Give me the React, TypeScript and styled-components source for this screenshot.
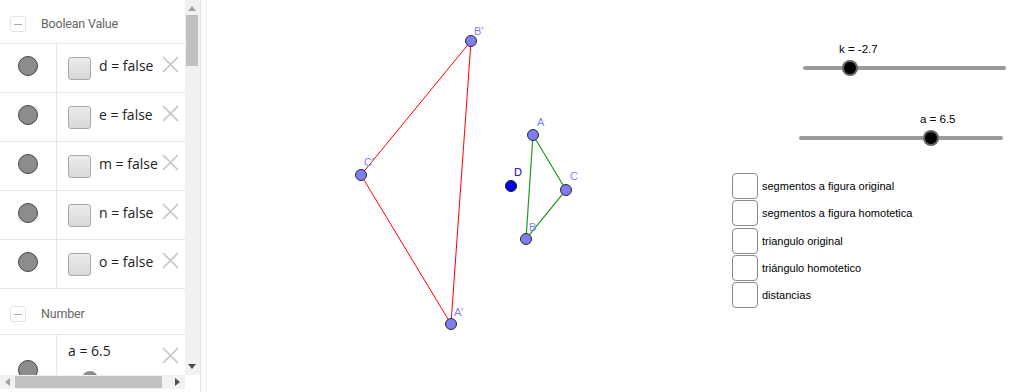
import styled, { createGlobalStyle } from 'styled-components';

const GlobalStyle = createGlobalStyle`
  html, body {
    margin: 0;
    padding: 0;
    background: #ffffff;
    overflow: hidden;
  }
  * {
    box-sizing: border-box;
  }
`;

interface BoolItem {
  name: string;
}

const BOOLEANS: Array<BoolItem> = [
  { name: 'd' },
  { name: 'e' },
  { name: 'm' },
  { name: 'n' },
  { name: 'o' },
];

interface Pt {
  label: string;
  x: number;
  y: number;
  lx: number;
  ly: number;
}

const IMAGE_PTS: Array<Pt> = [
  { label: "B'", x: 471, y: 41, lx: 474, ly: 35 },
  { label: "C'", x: 361, y: 175, lx: 364, ly: 166 },
  { label: "A'", x: 451, y: 324, lx: 454, ly: 316 },
];

const ORIG_PTS: Array<Pt> = [
  { label: 'A', x: 533, y: 135, lx: 537, ly: 126 },
  { label: 'C', x: 566, y: 190, lx: 570, ly: 180 },
  { label: 'B', x: 526, y: 239, lx: 529, ly: 231 },
];

const CHECKS = [
  'segmentos a figura original',
  'segmentos a figura homotetica',
  'triangulo original',
  'triángulo homotetico',
  'distancias',
];

const CANVAS_LEFT = 207;

const Page = styled.div`
  display: flex;
  width: 1010px;
  height: 392px;
  overflow: hidden;
`;

const AlgebraPanel = styled.div`
  position: relative;
  width: 200px;
  height: 392px;
  display: grid;
  grid-template-columns: 185px 15px;
  grid-template-rows: 375px 14px 3px;
  background: #ffffff;
`;

const AlgebraList = styled.div`
  overflow: hidden;
  font-family: 'Open Sans', 'Liberation Sans', sans-serif;
  color: #333333;
`;

const GroupHeader = styled.div<{ $h: number }>`
  display: flex;
  align-items: center;
  gap: 15px;
  height: ${({ $h }) => $h}px;
  padding: 4px 0 0 10px;
  border-bottom: 1px solid #e6e6e6;
  font-family: 'Roboto', 'Open Sans', sans-serif;
  font-size: 12.5px;
  letter-spacing: -0.2px;
  color: #666666;
`;

const CollapseBox = styled.span`
  position: relative;
  width: 16px;
  height: 16px;
  border: 1px solid #e3e3e3;
  border-radius: 3px;
  &::after {
    content: '';
    position: absolute;
    left: 3px;
    right: 3px;
    top: 7px;
    height: 1px;
    background: #aaaaaa;
  }
`;

const Row = styled.div<{ $h?: number }>`
  display: flex;
  height: ${({ $h }) => $h ?? 49}px;
  border-bottom: 1px solid #e6e6e6;
`;

const MarbleCell = styled.div<{ $top?: number }>`
  width: 57px;
  flex: none;
  display: flex;
  justify-content: center;
  align-items: ${({ $top }) => ($top ? 'flex-start' : 'center')};
  padding-top: ${({ $top }) => $top ?? 0}px;
  padding-bottom: ${({ $top }) => ($top ? 0 : 4)}px;
  border-right: 1px solid #e6e6e6;
`;

const Marble = styled.span`
  width: 20px;
  height: 20px;
  border-radius: 50%;
  background: #8c8c8c;
  border: 1px solid #444444;
`;

const ItemCell = styled.div`
  position: relative;
  flex: 1;
  display: flex;
  align-items: center;
  gap: 8px;
  padding: 0 0 0 11px;
`;

const BoolBox = styled.span`
  width: 23px;
  height: 23px;
  border-radius: 3px;
  border: 1px solid #a8a8a8;
  background: linear-gradient(#ececec, #d8d8d8);
`;

const ItemText = styled.span<{ $lift?: number }>`
  font-size: 14px;
  color: #222222;
  white-space: nowrap;
  margin-bottom: ${({ $lift }) => $lift ?? 0}px;
`;

const DeleteBtn = styled.svg`
  position: absolute;
  right: 6px;
  top: 12px;
`;

const NumberCell = styled.div`
  position: relative;
  flex: 1;
  display: flex;
  flex-direction: column;
  gap: 10px;
  padding: 6px 0 0 11px;
`;

const MiniSlider = styled.div`
  display: flex;
  align-items: center;
  gap: 4px;
  font-size: 14px;
  color: #222222;
`;

const MiniTrack = styled.span`
  position: relative;
  width: 24px;
  height: 3px;
  background: #888888;
  &::after {
    content: '';
    position: absolute;
    left: 2px;
    top: -7px;
    width: 16px;
    height: 16px;
    border-radius: 50%;
    background: #8c8c8c;
  }
`;

const VScroll = styled.div`
  position: relative;
  background: #f1f1f1;
`;

const HScroll = styled.div`
  position: relative;
  background: #f1f1f1;
`;

const ScrollArrow = styled.span<{ $dir: 'up' | 'down' | 'left' | 'right' }>`
  position: absolute;
  width: 0;
  height: 0;
  border: 4px solid transparent;
  ${({ $dir }) =>
    $dir === 'up'
      ? 'left: 3px; top: 2px; border-bottom: 5px solid #a3a3a3;'
      : $dir === 'down'
      ? 'left: 3px; bottom: 2px; border-top: 5px solid #505050;'
      : $dir === 'left'
      ? 'left: 1px; top: 3px; border-right: 5px solid #a3a3a3;'
      : 'right: 1px; top: 3px; border-left: 5px solid #505050;'}
`;

const VThumb = styled.span`
  position: absolute;
  left: 1px;
  right: 2px;
  top: 15px;
  height: 51px;
  background: #c1c1c1;
`;

const HThumb = styled.span`
  position: absolute;
  left: 15px;
  width: 147px;
  top: 1px;
  bottom: 1px;
  background: #c1c1c1;
`;

const Splitter = styled.div`
  width: 7px;
  flex: none;
  background: #fafafa;
  border-left: 1px solid #e4e4e4;
  border-right: 1px solid #ececec;
`;

const Canvas = styled.div`
  position: relative;
  flex: 1;
  height: 392px;
  background: #ffffff;
  font-family: 'Liberation Sans', Arial, sans-serif;
`;

const Drawing = styled.svg`
  position: absolute;
  inset: 0;
`;

const SliderWidget = styled.div`
  position: absolute;
  height: 4px;
  border-radius: 2px;
  background: #9a9a9a;
`;

const SliderLabel = styled.span`
  position: absolute;
  bottom: 15px;
  font-size: 11.5px;
  color: #000000;
  white-space: nowrap;
`;

const SliderKnob = styled.span`
  position: absolute;
  top: -6px;
  width: 16px;
  height: 16px;
  margin-left: -8px;
  border-radius: 50%;
  background: #000000;
  border: 2px solid rgba(110, 110, 110, 0.9);
`;

const CheckList = styled.div`
  position: absolute;
  left: ${732 - CANVAS_LEFT}px;
  top: 173px;
  display: flex;
  flex-direction: column;
  gap: 1.25px;
`;

const CheckRow = styled.label`
  display: flex;
  align-items: center;
  gap: 4px;
  height: 26px;
  font-size: 11px;
  color: #000000;
  white-space: nowrap;
`;

const CheckBox = styled.span`
  width: 26px;
  height: 26px;
  border: 1px solid #8a8a8a;
  border-radius: 4px;
  background: #ffffff;
`;

function Cross() {
  return (
    <DeleteBtn width="17" height="17" viewBox="0 0 17 17">
      <path d="M1 1 L16 16 M16 1 L1 16" stroke="#c4c4c4" strokeWidth="1.6" />
    </DeleteBtn>
  );
}

function Slider({
  x1,
  x2,
  y,
  knob,
  label,
  labelX,
}: {
  x1: number;
  x2: number;
  y: number;
  knob: number;
  label: string;
  labelX: number;
}) {
  return (
    <SliderWidget style={{ left: x1 - CANVAS_LEFT, top: y - 2, width: x2 - x1 }}>
      <SliderLabel style={{ left: labelX - x1 }}>{label}</SliderLabel>
      <SliderKnob style={{ left: knob - x1 }} />
    </SliderWidget>
  );
}

function PointDot({ p }: { p: Pt }) {
  return (
    <g>
      <circle cx={p.x} cy={p.y} r={5.5} fill="#7d7df5" stroke="#2b2b2b" strokeWidth={1} />
      <text x={p.lx} y={p.ly} fontSize="11" fill="#7f7fff" fontFamily="Liberation Sans, Arial, sans-serif">
        {p.label}
      </text>
    </g>
  );
}

export default function App() {
  const tri = (pts: Array<Pt>) => pts.map((p) => `${p.x},${p.y}`).join(' ');

  return (
    <Page>
      <GlobalStyle />
      <AlgebraPanel>
        <AlgebraList>
          <GroupHeader $h={44}>
            <CollapseBox />
            Boolean Value
          </GroupHeader>
          {BOOLEANS.map(({ name }) => (
            <Row key={name}>
              <MarbleCell>
                <Marble />
              </MarbleCell>
              <ItemCell>
                <BoolBox />
                <ItemText $lift={5}>{name} = false</ItemText>
                <Cross />
              </ItemCell>
            </Row>
          ))}
          <GroupHeader $h={46}>
            <CollapseBox />
            Number
          </GroupHeader>
          <Row $h={80}>
            <MarbleCell $top={25}>
              <Marble />
            </MarbleCell>
            <NumberCell>
              <ItemText>a = 6.5</ItemText>
              <MiniSlider>
                a <MiniTrack /> 6.5
              </MiniSlider>
              <Cross />
            </NumberCell>
          </Row>
        </AlgebraList>
        <VScroll>
          <ScrollArrow $dir="up" />
          <VThumb />
          <ScrollArrow $dir="down" />
        </VScroll>
        <HScroll>
          <ScrollArrow $dir="left" />
          <HThumb />
          <ScrollArrow $dir="right" />
        </HScroll>
      </AlgebraPanel>
      <Splitter />
      <Canvas>
        <Drawing width="803" height="392" viewBox={`${CANVAS_LEFT} 0 803 392`}>
          <polygon points={tri(IMAGE_PTS)} fill="none" stroke="#ff0000" strokeWidth={1} />
          <polygon points={tri(ORIG_PTS)} fill="none" stroke="#1f9a1f" strokeWidth={1.2} />
          {IMAGE_PTS.map((p) => (
            <PointDot key={p.label} p={p} />
          ))}
          {ORIG_PTS.map((p) => (
            <PointDot key={p.label} p={p} />
          ))}
          <circle cx={511} cy={186} r={5.5} fill="#0000ee" stroke="#1a1a1a" strokeWidth={1} />
          <text x={514} y={176} fontSize="11" fill="#0000ee" fontFamily="Liberation Sans, Arial, sans-serif">
            D
          </text>
        </Drawing>
        <Slider x1={803} x2={1006} y={68} knob={850} label="k = -2.7" labelX={839} />
        <Slider x1={799} x2={1003} y={138} knob={931} label="a = 6.5" labelX={920} />
        <CheckList>
          {CHECKS.map((c) => (
            <CheckRow key={c}>
              <CheckBox />
              {c}
            </CheckRow>
          ))}
        </CheckList>
      </Canvas>
    </Page>
  );
}
